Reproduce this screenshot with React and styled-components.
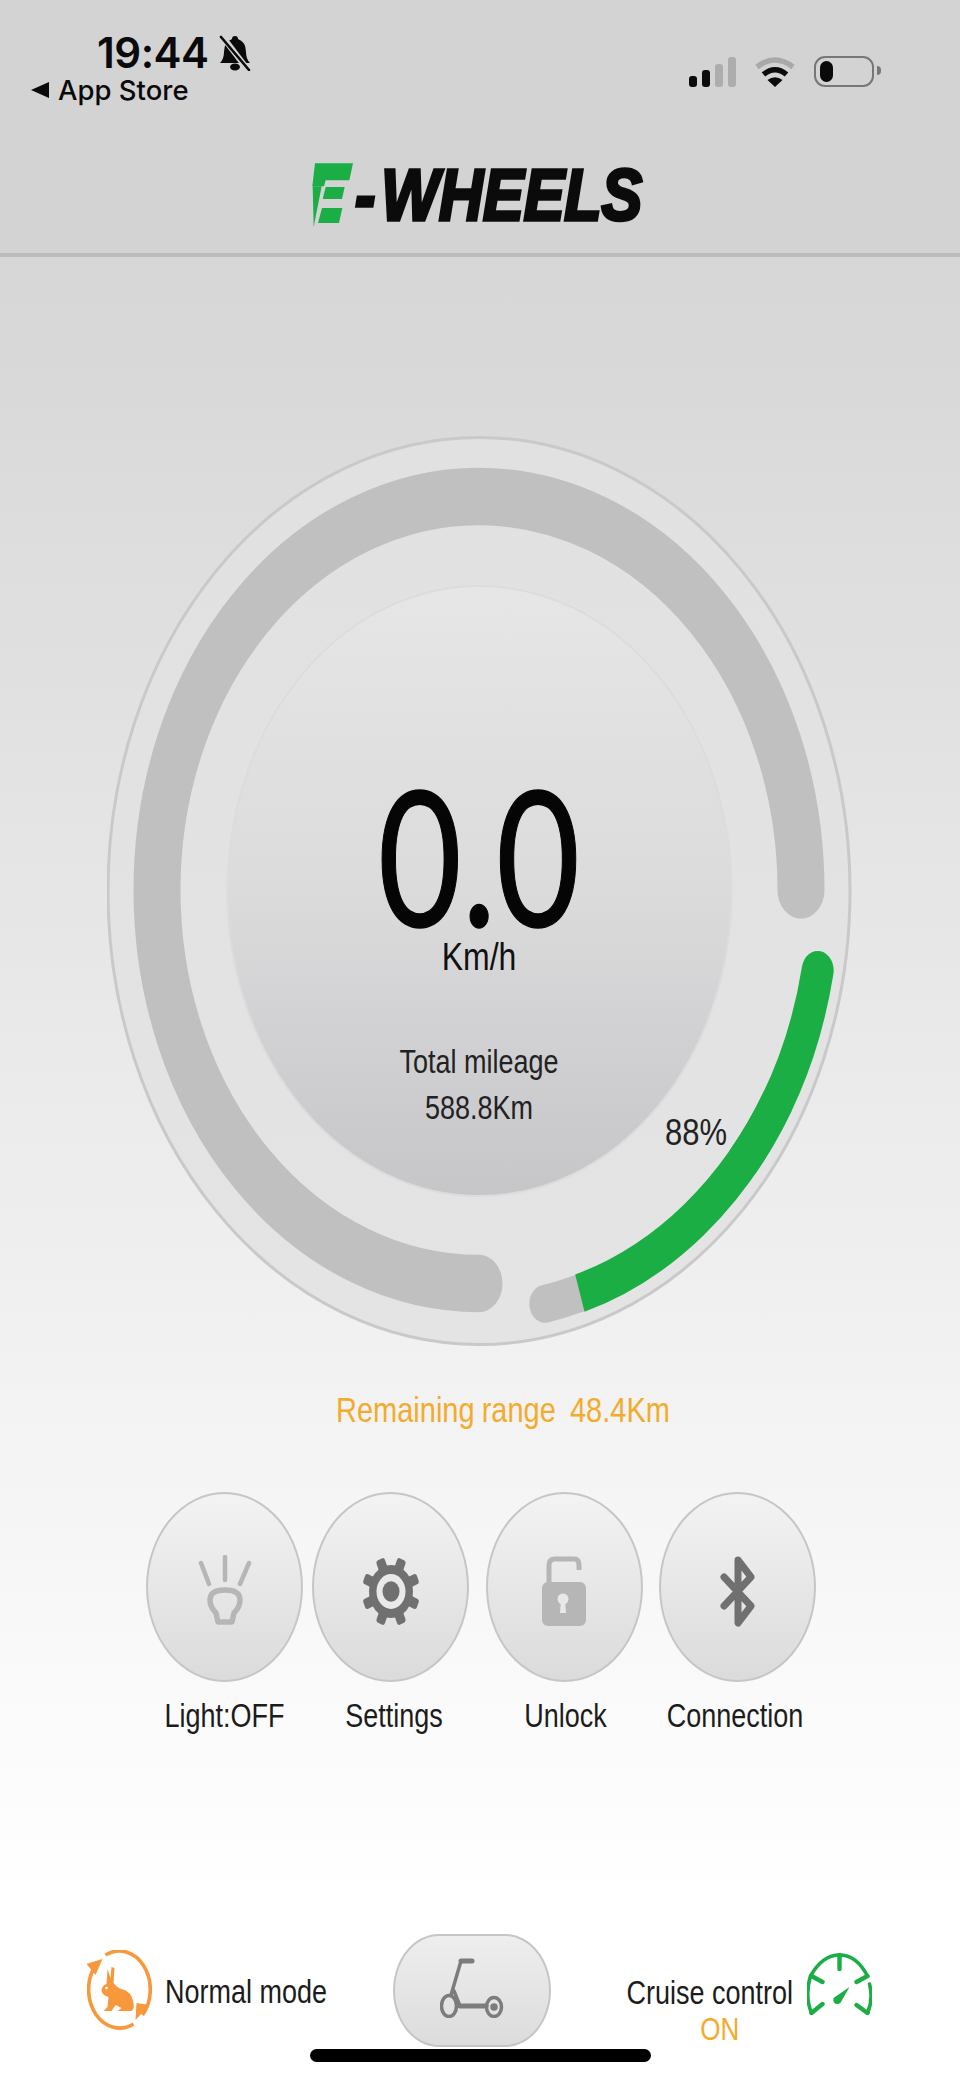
import React from "react";
import styled, { createGlobalStyle, css } from "styled-components";

const GREEN = "#1aae44";
const AMBER = "#f4ab2c";
const ICON_DARK = "#707070";
const ICON_LIGHT = "#b6b6b6";

const polar = (r, deg) => {
  const a = (deg * Math.PI) / 180;
  return [r * Math.cos(a), r * Math.sin(a)];
};

const arc = (r, from, to) => {
  const [x0, y0] = polar(r, from);
  const [x1, y1] = polar(r, to);
  const large = Math.abs(to - from) > 180 ? 1 : 0;
  const sweep = to > from ? 1 : 0;
  return `M${x0} ${y0} A${r} ${r} 0 ${large} ${sweep} ${x1} ${y1}`;
};

function Gauge() {
  return (
    <GaugeSvg viewBox="0 0 746 911">
      <defs>
        <linearGradient id="disc" x1="0" y1="0" x2="0" y2="1">
          <stop offset="0" stopColor="#e6e6e6" />
          <stop offset="0.5" stopColor="#dbdbdc" />
          <stop offset="1" stopColor="#c6c6c9" />
        </linearGradient>
        <linearGradient id="plate" x1="0" y1="0" x2="0" y2="1">
          <stop offset="0" stopColor="#e1e1e1" />
          <stop offset="1" stopColor="#e4e4e4" />
        </linearGradient>
      </defs>
      <ellipse cx="372" cy="455" rx="371" ry="453.5" fill="url(#plate)" stroke="#c9c9c9" strokeWidth="3" />
      <ellipse cx="372.5" cy="455" rx="252" ry="305" fill="url(#disc)" stroke="#dcdcdc" strokeWidth="2" />
      <g transform="translate(372 454) scale(1 1.222)">
        <path d={arc(322, 90, 360)} fill="none" stroke="#c0c0c0" strokeWidth="47" strokeLinecap="round" />
        <path d={arc(345, 79, 73)} fill="none" stroke="#c0c0c0" strokeWidth="31" strokeLinecap="round" />
        <path d={arc(345, 73, 30)} fill="none" stroke={GREEN} strokeWidth="32" />
        <path d={arc(345, 40, 11)} fill="none" stroke={GREEN} strokeWidth="32" strokeLinecap="round" />
      </g>
    </GaugeSvg>
  );
}

function LogoMark() {
  return (
    <svg width="41" height="64" viewBox="95 70 123 192">
      <g fill={GREEN}>
        <path d="M104 71H218L207 122H136L131 140H96Z" />
        <path d="M136 142H193L185 178H127Z" />
        <path d="M125 205H186L176 250H113Z" />
        <path d="M97 140H124L100 262Z" />
      </g>
    </svg>
  );
}

function BellOffIcon() {
  return (
    <svg width="32" height="36" viewBox="0 0 32 36">
      <path d="M16 1a3 3 0 0 1 3 3Q27 7 27 17Q27 24 31 28H1Q5 24 5 17Q5 7 13 4a3 3 0 0 1 3-3Z" fill="#0a0a0a" />
      <ellipse cx="16" cy="32" rx="5" ry="3.5" fill="#0a0a0a" />
      <path d="M3 1L29 35" stroke="#d3d3d3" strokeWidth="6" />
      <path d="M2 2L30 35" stroke="#0a0a0a" strokeWidth="2.6" strokeLinecap="round" />
    </svg>
  );
}

function SignalBars() {
  return (
    <svg width="47" height="30" viewBox="0 0 47 30">
      <rect x="0" y="19" width="8" height="11" rx="3" fill="#0c0c0c" />
      <rect x="13" y="13" width="8" height="17" rx="3" fill="#0c0c0c" />
      <rect x="26" y="7" width="8" height="23" rx="3" fill="#adadad" />
      <rect x="39" y="0" width="8" height="30" rx="3" fill="#adadad" />
    </svg>
  );
}

function WifiIcon() {
  return (
    <svg width="40" height="31" viewBox="0 0 40 31">
      <path d="M2 11Q20 -3 38 11" fill="none" stroke="#a9a9a9" strokeWidth="5.5" />
      <path d="M8.5 18.5Q20 9 31.5 18.5" fill="none" stroke="#0c0c0c" strokeWidth="5.5" />
      <path d="M20 31L12.5 24Q20 18.5 27.5 24Z" fill="#0c0c0c" />
    </svg>
  );
}

function LightIcon() {
  return (
    <svg width="54" height="72" viewBox="0 0 54 72" fill="none" stroke={ICON_LIGHT} strokeLinecap="round" strokeLinejoin="round">
      <path d="M3 8L11 29M27 2V25M51 8L42 29" strokeWidth="4.5" />
      <path d="M20 67L18 58Q12 52 12 45Q12 35 27 35Q42 35 42 45Q42 52 36 58L34 67Z" strokeWidth="5.5" />
    </svg>
  );
}

function GearIcon() {
  const teeth = [22.5, 67.5, 112.5, 157.5, 202.5, 247.5, 292.5, 337.5];
  return (
    <svg width="60" height="71" viewBox="-1 0 60 71">
      <g transform="translate(29 35.5) scale(1 1.2)" fill={ICON_DARK}>
        {teeth.map((t) => (
          <rect key={t} x="-4.5" y="-29" width="9" height="12" rx="2.5" transform={`rotate(${t})`} />
        ))}
        <circle r="22" />
        <circle r="14.5" fill="#e9e9e9" />
        <circle r="8.5" />
      </g>
    </svg>
  );
}

function LockIcon() {
  return (
    <svg width="44" height="70" viewBox="0 0 44 70">
      <path d="M7 28V9Q7 3 13 3H32Q37 3 37 9V14" fill="none" stroke={ICON_LIGHT} strokeWidth="5" />
      <rect x="0" y="26" width="44" height="44" rx="6" fill={ICON_LIGHT} />
      <circle cx="21" cy="43" r="5.5" fill="#e8e8e8" />
      <path d="M19 44H23L24 57H18Z" fill="#e8e8e8" />
    </svg>
  );
}

function BluetoothIcon() {
  return (
    <svg width="36" height="71" viewBox="-1 -1 36 71" fill="none" stroke={ICON_DARK} strokeWidth="7" strokeLinejoin="round" strokeLinecap="round">
      <path d="M3 20L30 49L17 66V3L30 20L3 49" />
    </svg>
  );
}

function ScooterIcon() {
  return (
    <svg width="64" height="60" viewBox="0 0 64 60" fill="none" stroke="#7c7c7c" strokeWidth="3.5" strokeLinecap="round">
      <path d="M21 3L11 37" />
      <path d="M21 3H32" strokeWidth="5" />
      <path d="M14 33L20 48H46" />
      <path d="M20 48H46" strokeWidth="5" />
      <ellipse cx="9" cy="48" rx="7.5" ry="10.5" />
      <ellipse cx="54" cy="49" rx="7.5" ry="9.5" />
      <circle cx="54" cy="49" r="2" fill="#7c7c7c" />
    </svg>
  );
}

function RabbitIcon() {
  const c = "#f7983c";
  return (
    <svg width="65" height="80" viewBox="17.5 10 65 80">
      <g fill="none" stroke={c} strokeWidth="3.6">
        <path d="M36 15A31 38.5 0 0 1 73 75" />
        <path d="M64 84A31 38.5 0 0 1 25 27" />
      </g>
      <g fill={c}>
        <path d="M67 63L80 65L66 80Z" />
        <path d="M17 24L33 19L26 35Z" />
        <path d="M38 29L41 38L42 27L45 28L44 43Q48 48 52 49Q62 51 64 63Q65 69 62 71L48 71L52 68L46 65L42 71L34 71L38 67L39 57Q32 55 32 50Q33 45 37 44Z" />
      </g>
      <circle cx="37" cy="48" r="1.3" fill="#fff" />
    </svg>
  );
}

function CruiseIcon() {
  return (
    <svg width="65" height="62" viewBox="17.5 12 65 62" fill="none" stroke={GREEN} strokeWidth="3.6" strokeLinecap="round">
      <path d="M21 35Q33 14 50 14Q67 14 78 35" />
      <path d="M50 14V28M22 35L33 41M78 35L67 41" strokeWidth="4.4" />
      <path d="M21 35Q15 55 22 72M80 43Q84 58 78 72" />
      <path d="M22 72L33 63M78 72L67 64" strokeWidth="4.4" />
      <path d="M60 46L44 57Q43 63 48 63Q51 63 52 60Z" fill={GREEN} stroke="none" />
    </svg>
  );
}

const buttons = [
  { label: "Light:OFF", icon: <LightIcon />, nudge: 0, tight: false },
  { label: "Settings", icon: <GearIcon />, nudge: 7, tight: true },
  { label: "Unlock", icon: <LockIcon />, nudge: 3, tight: false },
  { label: "Connection", icon: <BluetoothIcon />, nudge: -5, tight: false },
];

function App() {
  return (
    <>
      <GlobalStyle />
      <Screen>
        <Header>
          <StatusBar>
            <StatusLeft>
              <TimeRow>
                <Time>19:44</Time>
                <BellOffIcon />
              </TimeRow>
              <BackRow>
                <BackArrow />
                <BackLabel>App Store</BackLabel>
              </BackRow>
            </StatusLeft>
            <StatusRight>
              <SignalBars />
              <WifiIcon />
              <Battery>
                <BatteryLevel />
                <BatteryCap />
              </Battery>
            </StatusRight>
          </StatusBar>
          <Logo>
            <LogoMark />
            <LogoDash>-</LogoDash>
            <LogoText>WHEELS</LogoText>
          </Logo>
        </Header>

        <Main>
          <GaugeWrap>
            <Gauge />
            <GaugeText>
              <Speed>0.0</Speed>
              <Unit>Km/h</Unit>
              <MileageLabel>Total mileage</MileageLabel>
              <MileageValue>588.8Km</MileageValue>
            </GaugeText>
            <Percent>88%</Percent>
          </GaugeWrap>

          <Range>Remaining range&nbsp; 48.4Km</Range>

          <ButtonRow>
            {buttons.map((b) => (
              <ButtonItem key={b.label} $tight={b.tight}>
                <RoundButton>{b.icon}</RoundButton>
                <ButtonLabel $nudge={b.nudge}>{b.label}</ButtonLabel>
              </ButtonItem>
            ))}
          </ButtonRow>
        </Main>

        <BottomBar>
          <ModeGroup>
            <RabbitIcon />
            <BottomText>Normal mode</BottomText>
          </ModeGroup>
          <ScooterButton>
            <ScooterIcon />
          </ScooterButton>
          <CruiseGroup>
            <CruiseText>
              <BottomText>Cruise control</BottomText>
              <CruiseState>ON</CruiseState>
            </CruiseText>
            <CruiseIcon />
          </CruiseGroup>
        </BottomBar>

        <HomeBar />
      </Screen>
    </>
  );
}

export default App;

// ============================== STYLES ==============================

const GlobalStyle = createGlobalStyle`
  html, body {
    margin: 0;
    padding: 0;
    background: #fff;
  }
`;

// the app's UI is stretched vertically in the screenshot
const tall = css`
  font-family: "Liberation Sans", Arial, sans-serif;
  transform: scaleY(1.22);
  white-space: nowrap;
`;

const Screen = styled.div`
  position: relative;
  width: 960px;
  height: 2081px;
  overflow: hidden;
  display: flex;
  flex-direction: column;
  background: #fff;
`;

const Header = styled.header`
  box-sizing: border-box;
  height: 257px;
  background: #d3d3d3;
  border-bottom: 4px solid #bcbcbc;
`;

const StatusBar = styled.div`
  display: flex;
  justify-content: space-between;
  align-items: flex-start;
  padding: 33px 80px 0 31px;
  color: #0a0a0a;
  font-family: Inter, sans-serif;
`;

const StatusLeft = styled.div`
  display: flex;
  flex-direction: column;
  gap: 3px;
  padding-bottom: 2px;
`;

const TimeRow = styled.div`
  display: flex;
  align-items: center;
  gap: 11px;
  height: 40px;
  padding-left: 66px;
`;

const Time = styled.span`
  font-size: 42px;
  font-weight: 600;
  line-height: 40px;
  letter-spacing: -0.5px;
`;

const BackRow = styled.div`
  display: flex;
  align-items: center;
  gap: 9px;
  height: 28px;
`;

const BackArrow = styled.span`
  width: 0;
  height: 0;
  border-style: solid;
  border-width: 8px 18px 8px 0;
  border-color: transparent #0a0a0a transparent transparent;
`;

const BackLabel = styled.span`
  font-size: 27.5px;
  font-weight: 500;
  line-height: 28px;
`;

const StatusRight = styled.div`
  display: flex;
  align-items: flex-end;
  gap: 19px;
  padding-top: 23px;
`;

const Battery = styled.div`
  box-sizing: border-box;
  position: relative;
  width: 60px;
  height: 31px;
  margin-right: 6px;
  padding: 3px 4px;
  border: 2.5px solid #777;
  border-radius: 11px;
`;

const BatteryLevel = styled.div`
  width: 13px;
  height: 100%;
  background: #0a0a0a;
  border-radius: 7px;
`;

const BatteryCap = styled.div`
  position: absolute;
  top: 8px;
  right: -9px;
  width: 4px;
  height: 9px;
  background: #777;
  border-radius: 0 4px 4px 0;
`;

const Logo = styled.div`
  display: flex;
  align-items: center;
  margin: 57px 0 0 312px;
  height: 64px;
`;

const logoType = css`
  font-family: "Liberation Sans", Arial, sans-serif;
  font-size: 61px;
  font-weight: 700;
  font-style: italic;
  line-height: 50px;
  color: #0b0b0b;
  -webkit-text-stroke: 3px #0b0b0b;
  transform: scaleY(1.18);
`;

const LogoDash = styled.span`
  ${logoType}
  margin-left: 2px;
`;

const LogoText = styled.span`
  ${logoType}
  margin-left: 6px;
`;

const Main = styled.main`
  flex: 1;
  display: flex;
  flex-direction: column;
  padding-top: 179px;
  background: linear-gradient(to bottom, #d6d6d6, #ffffff);
`;

const GaugeWrap = styled.div`
  position: relative;
  width: 746px;
  height: 911px;
  margin-left: 107px;
`;

const GaugeSvg = styled.svg`
  display: block;
  width: 746px;
  height: 911px;
`;

const GaugeText = styled.div`
  position: absolute;
  inset: 0;
  display: flex;
  flex-direction: column;
  align-items: center;
  padding: 364px 2px 0 0;
  color: #111;
`;

const Speed = styled.div`
  ${tall}
  transform: scaleY(1.3);
  font-family: Lato, "Liberation Sans", sans-serif;
  font-size: 145px;
  line-height: 108px;
  color: #050505;
  -webkit-text-stroke: 1px #050505;
`;

const Unit = styled.div`
  ${tall}
  margin-top: 29px;
  font-size: 32px;
  line-height: 40px;
`;

const MileageLabel = styled.div`
  ${tall}
  margin-top: 62px;
  font-size: 27px;
  line-height: 46px;
  color: #222;
`;

const MileageValue = styled.div`
  ${tall}
  font-size: 27px;
  line-height: 46px;
  color: #222;
`;

const Percent = styled.div`
  ${tall}
  position: absolute;
  left: 558px;
  top: 679px;
  font-size: 31px;
  line-height: 36px;
  color: #222;
`;

const Range = styled.div`
  ${tall}
  margin: 43px 0 0 336px;
  font-size: 29px;
  line-height: 40px;
  word-spacing: -1px;
  color: ${AMBER};
`;

const ButtonRow = styled.div`
  display: flex;
  gap: 16.5px;
  margin: 62px 0 0 146px;
`;

const ButtonItem = styled.div`
  display: flex;
  flex-direction: column;
  align-items: center;
  gap: 16px;
  width: 157px;
  margin-left: ${(p) => (p.$tight ? "-7.5px" : "0")};
`;

const RoundButton = styled.div`
  box-sizing: border-box;
  width: 157px;
  height: 190px;
  padding-top: 8px;
  display: flex;
  align-items: center;
  justify-content: center;
  border: 2.5px solid #c6c6c6;
  border-radius: 50%;
  background: linear-gradient(to bottom, #f3f3f3, #dbdbdb);
`;

const ButtonLabel = styled.div`
  ${tall}
  margin-left: ${(p) => p.$nudge}px;
  font-size: 27px;
  line-height: 36px;
  color: #1c1c1c;
`;

const BottomBar = styled.footer`
  box-sizing: border-box;
  height: 182px;
  display: grid;
  grid-template-columns: 393px 158px 1fr;
  padding-top: 35px;
  background: #fff;
`;

const ModeGroup = styled.div`
  display: flex;
  align-items: center;
  align-self: start;
  gap: 13px;
  height: 80px;
  margin-top: 16px;
  padding-left: 87px;
`;

const BottomText = styled.div`
  ${tall}
  padding-top: 3px;
  font-size: 27px;
  line-height: 36px;
  color: #1c1c1c;
`;

const ScooterButton = styled.div`
  box-sizing: border-box;
  width: 158px;
  height: 113px;
  padding-bottom: 5px;
  display: flex;
  align-items: center;
  justify-content: center;
  border: 2.5px solid #c6c6c6;
  border-radius: 46px / 50%;
  background: linear-gradient(to bottom, #eeeeee, #dcdcdc);
`;

const CruiseGroup = styled.div`
  display: flex;
  align-items: flex-start;
  justify-content: flex-end;
  gap: 14px;
  padding: 19px 88px 0 0;
`;

const CruiseText = styled.div`
  display: flex;
  flex-direction: column;
  align-items: center;
  margin-top: 19px;
`;

const CruiseState = styled.div`
  ${tall}
  margin: 0 0 0 20px;
  font-size: 26px;
  line-height: 36px;
  color: ${AMBER};
`;

const HomeBar = styled.div`
  position: absolute;
  left: 310px;
  bottom: 19px;
  width: 341px;
  height: 13px;
  background: #000;
  border-radius: 7px;
`;
